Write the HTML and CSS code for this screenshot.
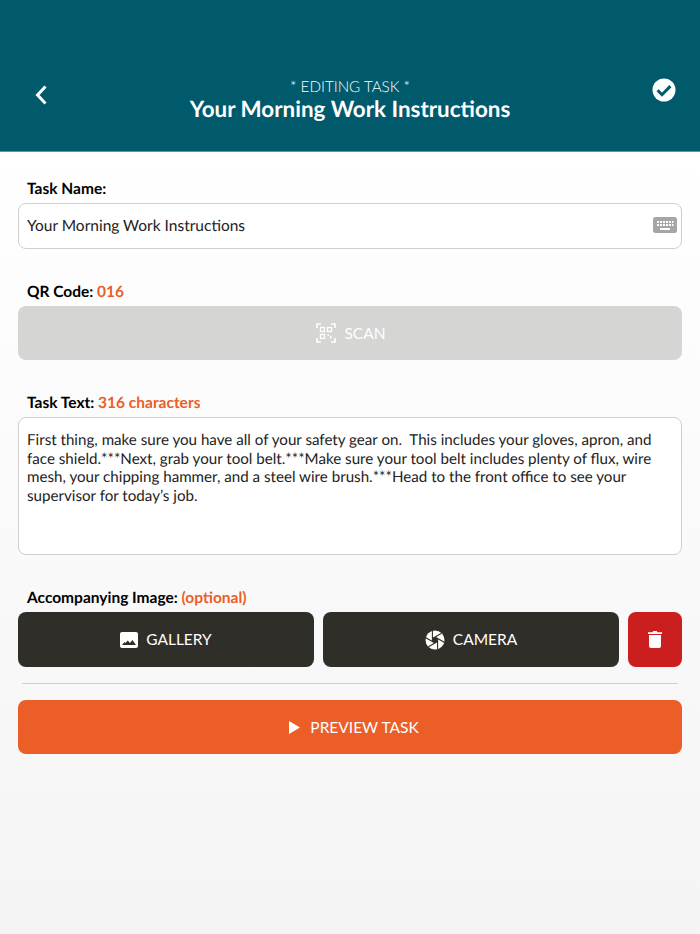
FILE: index.html
```html
<!DOCTYPE html>
<html lang="en">
<head>
<meta charset="utf-8">
<title>Editing Task</title>
<link rel="stylesheet" href="styles.css">
</head>
<body>
<header class="header">
  <button class="icon-btn back" aria-label="Back">
    <svg width="14" height="20" viewBox="0 0 14 20"><path d="M11.500 1.500 3.500 10l8 8.500" fill="none" stroke="#fff" stroke-width="3"/></svg>
  </button>
  <div class="titles">
    <div class="eyebrow">* EDITING TASK *</div>
    <h1 class="title">Your Morning Work Instructions</h1>
  </div>
  <button class="icon-btn" aria-label="Save">
    <svg width="24" height="24" viewBox="0 0 24 24"><circle cx="12" cy="12" r="11.500" fill="#fff"/><path d="M5.600 12.300l4.400 4.400 8.400-8.600" fill="none" stroke="#005a6c" stroke-width="3"/></svg>
  </button>
</header>
<main class="form">
  <label class="label">Task Name:</label>
  <div class="field name-field">
    <span>Your Morning Work Instructions</span>
    <svg class="kbd" width="24" height="16" viewBox="0 0 24 16">
      <rect width="24" height="16" rx="2.500" fill="#a6a6a6"/>
      <path d="M4 4h2v2H4zM7 4h2v2H7zM10 4h2v2h-2zM13 4h2v2h-2zM16 4h2v2h-2zM19 4h1.500v2H19zM4 7h2v2H4zM7 7h2v2H7zM10 7h2v2h-2zM13 7h2v2h-2zM16 7h2v2h-2zM19 7h1.500v2H19zM7 11h10v2H7z" fill="#fff"/>
    </svg>
  </div>

  <label class="label qr">QR Code: <em>016</em></label>
  <button class="btn scan">
    <svg width="20" height="20" viewBox="0 0 20 20" fill="none" stroke="#fff" stroke-width="1.300">
      <path d="M1 5V1h4M15 1h4v4M19 15v4h-4M5 19H1v-4" stroke-width="1.600"/>
      <rect x="4.500" y="4.500" width="4" height="4"/><rect x="11.500" y="4.500" width="4" height="4"/><rect x="4.500" y="11.500" width="4" height="4"/>
      <path d="M11.500 11.500h1.500v1.500h-1.500zM14 13h1.500v2.500H14z" fill="#fff" stroke="none"/>
    </svg>
    <span>SCAN</span>
  </button>

  <label class="label text">Task Text: <em>316 characters</em></label>
  <div class="field area">First thing, make sure you have all of your safety gear on.&nbsp; This includes your gloves, apron, and face shield.***Next, grab your tool belt.***Make sure your tool belt includes plenty of flux, wire mesh, your chipping hammer, and a steel wire brush.***Head to the front office to see your supervisor for today’s job.</div>

  <label class="label image">Accompanying Image: <em>(optional)</em></label>
  <div class="actions">
    <button class="btn dark">
      <svg width="18" height="16" viewBox="0 0 18 16"><path fill-rule="evenodd" d="M2 0h14a2 2 0 0 1 2 2v12a2 2 0 0 1-2 2H2a2 2 0 0 1-2-2V2a2 2 0 0 1 2-2zM2 13h14l-3.600-5-2.400 3-2.200-2.600L5.500 11 4.700 10z" fill="#fff"/></svg>
      <span>GALLERY</span>
    </button>
    <button class="btn dark">
      <svg width="20" height="20" viewBox="0 0 20 20">
        <circle cx="10" cy="10" r="9.500" fill="#fff"/>
        <path d="M10 7 12.600 8.500V11.500L10 13 7.400 11.500V8.500z" fill="#302e29"/>
        <path d="M10 7 19.200 12.300M12.600 8.500V19.100M12.600 11.500 3.400 16.800M10 13 .8 7.700M7.400 11.500V.9M7.400 8.500 16.600 3.200" stroke="#302e29" stroke-width="1.100" fill="none"/>
      </svg>
      <span>CAMERA</span>
    </button>
    <button class="btn trash" aria-label="Delete">
      <svg width="14" height="17" viewBox="0 0 14 17"><path d="M4.500 1.200 5.200 0h3.600l.7 1.200H14v1.800H0V1.200zM1 4h12v11a2 2 0 0 1-2 2H3a2 2 0 0 1-2-2z" fill="#fff"/></svg>
    </button>
  </div>
  <hr class="divider">
  <button class="btn preview">
    <svg width="11" height="13" viewBox="0 0 11 13"><path d="M0 0l11 6.500-11 6.500z" fill="#fff"/></svg>
    <span>PREVIEW TASK</span>
  </button>
</main>
</body>
</html>
```
FILE: styles.css
```css
* { box-sizing: border-box; }
html, body { margin: 0; height: 100%; }
body {
  min-height: 934px;
  font-family: "Lato", "Liberation Sans", sans-serif;
  text-rendering: geometricPrecision;
  color: #000;
  background: linear-gradient(#fff 152px, #f4f4f4 100%);
}
.header {
  height: 152px;
  background: #005a6c;
  border-bottom: 1px solid #5c97a3;
  display: flex;
  align-items: flex-start;
  justify-content: space-between;
  padding: 78px 24px 0 34px;
  color: #fff;
}
.icon-btn { background: none; border: 0; padding: 0; display: flex; }
.back { margin-top: 7px; }
.titles { text-align: center; padding-top: 1px; }
.eyebrow { font-size: 15.200px; font-weight: 300; line-height: 16px; }
.title { margin: -1px 0 0; font-size: 22.400px; font-weight: 700; line-height: 30px; }
.form { padding: 27px 18px 0; display: flex; flex-direction: column; }
.label { height: 18px; padding-top: 1px; font-size: 15.500px; font-weight: 700; line-height: 18px; padding-left: 9px; }
.label em { font-style: normal; color: #eb5e28; }
.field {
  background: #fff;
  border: 1px solid #cfcfcf;
  border-radius: 8px;
  font-size: 15.500px;
  color: #222;
}
.name-field {
  margin-top: 6px;
  height: 46px;
  display: flex;
  align-items: center;
  justify-content: space-between;
  padding: 0 4px 0 8px;
}
.kbd { margin-bottom: 2px; }
.qr { margin-top: 33px; }
.text { margin-top: 33px; }
.image { margin-top: 33px; }
.area { margin-top: 6px; height: 138px; padding: 13px 8px 0; font-size: 15.150px; line-height: 18.600px; }
.btn {
  border: 0;
  border-radius: 8px;
  height: 54px;
  padding: 0;
  display: flex;
  align-items: center;
  justify-content: center;
  gap: 8px;
  font-family: inherit;
  font-size: 15.500px;
  color: #fff;
}
.btn span { padding-bottom: 1px; }
.scan { margin-top: 6px; background: #d5d5d3; padding-left: 2px; }
.actions { margin-top: 6px; display: grid; grid-template-columns: 1fr 1fr 54px; gap: 9px; }
.actions .btn { height: 55px; }
.dark { background: #302e29; }
.trash { background: #cb1e1e; }
.divider { margin: 16px 4px; border: 0; border-top: 1px solid #cfcfcd; }
.preview { background: #eb5e28; gap: 10px; padding-left: 8px; }
```
